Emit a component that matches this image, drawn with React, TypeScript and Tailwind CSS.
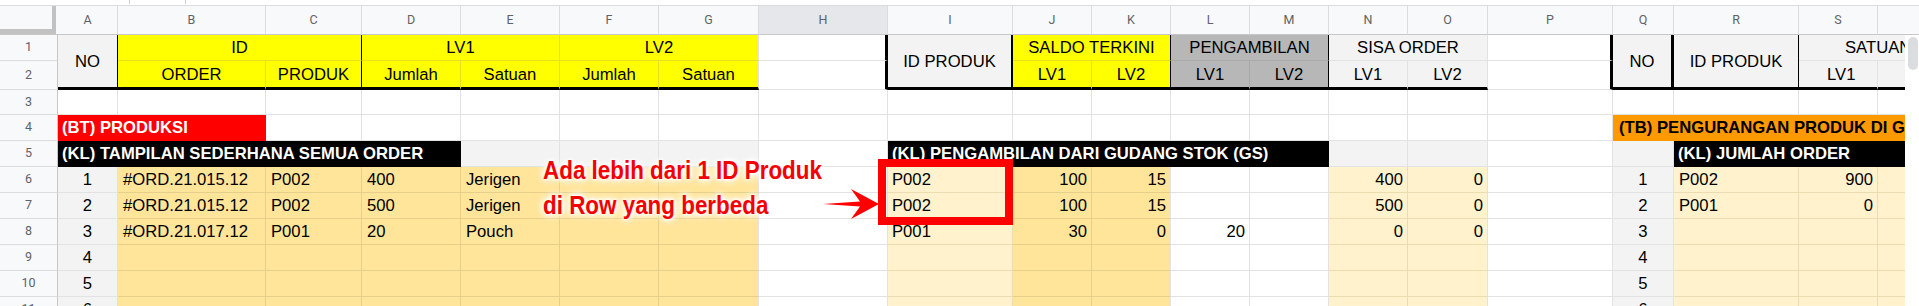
import React from "react";

// gridline colours per fill
const R_DEF = "border-r border-r-[#e2e2e2]";
const B_DEF = "border-b border-b-[#e2e2e2]";
const R_Y = "border-r border-r-[#e4e41e]";
const B_Y = "border-b border-b-[#e4e41e]";
const R_O = "border-r border-r-[#e6cf8a]";
const B_O = "border-b border-b-[#e6cf8a]";
const R_L = "border-r border-r-[#ecdcb2]";
const B_L = "border-b border-b-[#ecdcb2]";
const R_G = "border-r border-r-[#a9a9a9]";
const B_G = "border-b border-b-[#a9a9a9]";
const R_K = "border-r border-r-black";
const R_K2 = "border-r-2 border-r-black";
const R_K3 = "border-r-[3px] border-r-black";
const B_K3 = "border-b-[3px] border-b-black";

interface CellProps {
  children?: React.ReactNode;
  className?: string;
  r?: string;
  b?: string;
}

const Cell: React.FC<CellProps> = ({ children, className = "", r = R_DEF, b = B_DEF }) => (
  <div className={`flex items-center overflow-hidden whitespace-nowrap ${r} ${b} ${className}`}>{children}</div>
);

const RowNum: React.FC<{ n: number }> = ({ n }) => (
  <div className="flex items-center justify-center border-r border-r-[#c7c7c7] border-b border-b-[#dadce0] bg-[#f8f9fa] font-['Roboto',sans-serif] text-[12.5px] text-[#5f6368]">
    {n}
  </div>
);

const letters = ["A", "B", "C", "D", "E", "F", "G", "H", "I", "J", "K", "L", "M", "N", "O", "P", "Q", "R", "S", "T"];

const data = [
  { no: 1, order: "#ORD.21.015.12", prod: "P002", qty: "400", unit: "Jerigen", id: "P002", j: "100", k: "15", l: "", n: "400", o: "0", r: "P002", s: "900" },
  { no: 2, order: "#ORD.21.015.12", prod: "P002", qty: "500", unit: "Jerigen", id: "P002", j: "100", k: "15", l: "", n: "500", o: "0", r: "P001", s: "0" },
  { no: 3, order: "#ORD.21.017.12", prod: "P001", qty: "20", unit: "Pouch", id: "P001", j: "30", k: "0", l: "20", n: "0", o: "0", r: "", s: "" },
  { no: 4, order: "", prod: "", qty: "", unit: "", id: "", j: "", k: "", l: "", n: "", o: "", r: "", s: "" },
  { no: 5, order: "", prod: "", qty: "", unit: "", id: "", j: "", k: "", l: "", n: "", o: "", r: "", s: "" },
  { no: 6, order: "", prod: "", qty: "", unit: "", id: "", j: "", k: "", l: "", n: "", o: "", r: "", s: "" },
];

const App: React.FC = () => {
  return (
    <div className="relative h-[306px] w-[1919px] overflow-hidden bg-white font-['Liberation_Sans',Arial,sans-serif] text-[16.67px] text-black">
      {/* remains of the formula bar */}
      <div className="flex h-[6px] border-b border-b-[#dadce0] bg-white">
        <div className="ml-[129px] h-[4px] w-px bg-[#d0d0d0]" />
        <div className="ml-[55px] h-[4px] w-px bg-[#d0d0d0]" />
      </div>

      <div className="flex">
        <div className="w-[1905px] overflow-hidden">
          <div className="grid grid-cols-[58px_60px_148px_96px_99px_99px_99px_100px_129px_125px_79px_79px_79px_79px_79px_80px_125px_61px_125px_79px_80px] grid-rows-[29px_26px_29px_25px_26px_26px_26px_26px_26px_26px_26px_26px]">
            {/* column letters */}
            <div className="border-b border-b-[#c7c7c7] bg-[#f8f9fa]">
              <div className="h-full w-[56px] border-r-[4px] border-r-[#c2c2c2] border-b-[5px] border-b-[#c2c2c2]" />
            </div>
            {letters.map((l) => (
              <div
                key={l}
                className={`flex items-center justify-center border-r border-r-[#dadce0] border-b border-b-[#c7c7c7] font-['Roboto',sans-serif] text-[12.5px] text-[#5f6368] ${
                  l === "H" ? "bg-[#e5e7ea]" : "bg-[#f8f9fa]"
                }`}
              >
                {l}
              </div>
            ))}

            {/* row 1 */}
            <RowNum n={1} />
            <Cell className="row-span-2 justify-center bg-[#f3f3f3]" r={R_K} b={B_K3}>NO</Cell>
            <Cell className="col-span-2 justify-center bg-[#ffff00]" r={R_K} b={B_Y}>ID</Cell>
            <Cell className="col-span-2 justify-center bg-[#ffff00]" r={R_Y} b={B_Y}>LV1</Cell>
            <Cell className="col-span-2 justify-center bg-[#ffff00]" b={B_Y}>LV2</Cell>
            <Cell r={R_K3} />
            <Cell className="row-span-2 justify-center bg-[#f3f3f3]" r={R_K2} b={B_K3}>ID PRODUK</Cell>
            <Cell className="col-span-2 justify-center bg-[#ffff00]" r={R_K} b={B_Y}>SALDO TERKINI</Cell>
            <Cell className="col-span-2 justify-center bg-[#b7b7b7]" r={R_K} b={B_G}>PENGAMBILAN</Cell>
            <Cell className="col-span-2 justify-center bg-[#f3f3f3]">SISA ORDER</Cell>
            <Cell r={R_K3} />
            <Cell className="row-span-2 justify-center bg-[#f3f3f3]" r={R_K3} b={B_K3}>NO</Cell>
            <Cell className="row-span-2 justify-center bg-[#f3f3f3]" r={R_K} b={B_K3}>ID PRODUK</Cell>
            <Cell className="col-span-2 bg-[#f3f3f3] pl-[46px]">SATUAN</Cell>

            {/* row 2 */}
            <RowNum n={2} />
            <Cell className="justify-center bg-[#ffff00]" r={R_Y} b={B_K3}>ORDER</Cell>
            <Cell className="justify-center bg-[#ffff00]" r={R_K} b={B_K3}>PRODUK</Cell>
            <Cell className="justify-center bg-[#ffff00]" r={R_Y} b={B_K3}>Jumlah</Cell>
            <Cell className="justify-center bg-[#ffff00]" r={R_Y} b={B_K3}>Satuan</Cell>
            <Cell className="justify-center bg-[#ffff00]" r={R_Y} b={B_K3}>Jumlah</Cell>
            <Cell className="justify-center bg-[#ffff00]" b={B_K3}>Satuan</Cell>
            <Cell r={R_K3} />
            <Cell className="justify-center bg-[#ffff00]" r={R_Y} b={B_K3}>LV1</Cell>
            <Cell className="justify-center bg-[#ffff00]" r={R_K} b={B_K3}>LV2</Cell>
            <Cell className="justify-center bg-[#b7b7b7]" r={R_G} b={B_K3}>LV1</Cell>
            <Cell className="justify-center bg-[#b7b7b7]" r={R_K} b={B_K3}>LV2</Cell>
            <Cell className="justify-center bg-[#f3f3f3]" b={B_K3}>LV1</Cell>
            <Cell className="justify-center bg-[#f3f3f3]" b={B_K3}>LV2</Cell>
            <Cell r={R_K3} />
            <Cell className="bg-[#f3f3f3] pl-[28px]" b={B_K3}>LV1</Cell>
            <Cell className="bg-[#f3f3f3]" b={B_K3} />

            {/* row 3 */}
            <RowNum n={3} />
            {letters.map((l) => (
              <Cell key={`r3-${l}`} />
            ))}

            {/* row 4 */}
            <RowNum n={4} />
            <Cell className="col-span-2 bg-[#ff0000] pl-[4px] font-bold text-white" r="border-r border-r-[#ff0000]" b="border-b border-b-[#ff0000]">
              (BT) PRODUKSI
            </Cell>
            {letters.slice(2, 16).map((l) => (
              <Cell key={`r4-${l}`} />
            ))}
            <Cell className="col-span-4 bg-[#ff9900] pl-[6px] font-bold" r="border-r border-r-[#ff9900]" b="border-b border-b-[#ff9900]">
              (TB) PENGURANGAN PRODUK DI GUDANG STOK (GS)
            </Cell>

            {/* row 5 */}
            <RowNum n={5} />
            <Cell className="col-span-4 bg-black pl-[4px] font-bold text-white" r="border-r border-r-black" b="border-b border-b-black">
              (KL) TAMPILAN SEDERHANA SEMUA ORDER
            </Cell>
            <Cell className="bg-[#f3f3f3]" />
            <Cell className="bg-[#f3f3f3]" />
            <Cell className="bg-[#f3f3f3]" />
            <Cell />
            <Cell className="col-span-5 bg-black pl-[4px] font-bold text-white" r="border-r border-r-black" b="border-b border-b-black">
              (KL) PENGAMBILAN DARI GUDANG STOK (GS)
            </Cell>
            <Cell className="bg-[#f3f3f3]" />
            <Cell className="bg-[#f3f3f3]" />
            <Cell />
            <Cell className="bg-[#f3f3f3]" />
            <Cell className="col-span-3 bg-black pl-[4px] font-bold text-white" r="border-r border-r-black" b="border-b border-b-black">
              (KL) JUMLAH ORDER
            </Cell>

            {/* rows 6 - 11 */}
            {data.map((d, i) => (
              <React.Fragment key={d.no}>
                <RowNum n={i + 6} />
                <Cell className="justify-center bg-[#f3f3f3]">{d.no}</Cell>
                <Cell className="bg-[#ffe599] pl-[5px]" r={R_O} b={B_O}>{d.order}</Cell>
                <Cell className="bg-[#ffe599] pl-[5px]" r={R_O} b={B_O}>{d.prod}</Cell>
                <Cell className="bg-[#ffe599] pl-[5px]" r={R_O} b={B_O}>{d.qty}</Cell>
                <Cell className="bg-[#ffe599] pl-[5px]" r={R_O} b={B_O}>{d.unit}</Cell>
                <Cell className="bg-[#ffe599]" r={R_O} b={B_O} />
                <Cell className="bg-[#ffe599]" b={B_O} />
                <Cell />
                <Cell className="bg-[#fff2cc] pl-[4px]" r={R_L} b={B_L}>{d.id}</Cell>
                <Cell className="justify-end bg-[#ffe599] pr-[4px]" r={R_O} b={B_O}>{d.j}</Cell>
                <Cell className="justify-end bg-[#ffe599] pr-[4px]" b={B_O}>{d.k}</Cell>
                <Cell className="justify-end pr-[4px]">{d.l}</Cell>
                <Cell />
                <Cell className="justify-end bg-[#fff2cc] pr-[4px]" r={R_L} b={B_L}>{d.n}</Cell>
                <Cell className="justify-end bg-[#fff2cc] pr-[4px]" b={B_L}>{d.o}</Cell>
                <Cell />
                <Cell className="justify-center bg-[#f3f3f3]">{d.no}</Cell>
                <Cell className="bg-[#fff2cc] pl-[5px]" r={R_L} b={B_L}>{d.r}</Cell>
                <Cell className="justify-end bg-[#fff2cc] pr-[4px]" r={R_L} b={B_L}>{d.s}</Cell>
                <Cell className="bg-[#fff2cc]" r={R_L} b={B_L} />
              </React.Fragment>
            ))}
          </div>
        </div>

        {/* vertical scrollbar */}
        <div className="flex w-[14px] flex-col">
          <div className="h-[29px] border-b border-b-[#c7c7c7] bg-[#f8f9fa]" />
          <div className="flex-1 bg-white pl-[3px] pt-[2px]">
            <div className="h-[33px] w-[10px] rounded-full bg-[#dadce0]" />
          </div>
        </div>
      </div>

      {/* annotation */}
      <div className="absolute left-[543px] top-[153px] origin-top-left scale-x-[0.862] whitespace-nowrap font-['Liberation_Sans',Arial,sans-serif] text-[26px] font-bold leading-[35px] text-[#f50000] [text-shadow:0_0_3px_#fff,0_0_5px_#fff,0_0_7px_#fff,0_0_9px_#fff,0_0_11px_#fff]">
        <div>Ada lebih dari 1 ID Produk</div>
        <div>di Row yang berbeda</div>
      </div>
      <svg className="absolute left-0 top-0" width="1919" height="306" viewBox="0 0 1919 306">
        <polygon points="823,204 860,201.5 851,189 879,204 851,219 860,206.5" fill="#ff0000" />
      </svg>
      <div className="absolute left-[878px] top-[159px] h-[66px] w-[135px] border-[8px] border-[#ff0000]" />
    </div>
  );
};

export default App;
